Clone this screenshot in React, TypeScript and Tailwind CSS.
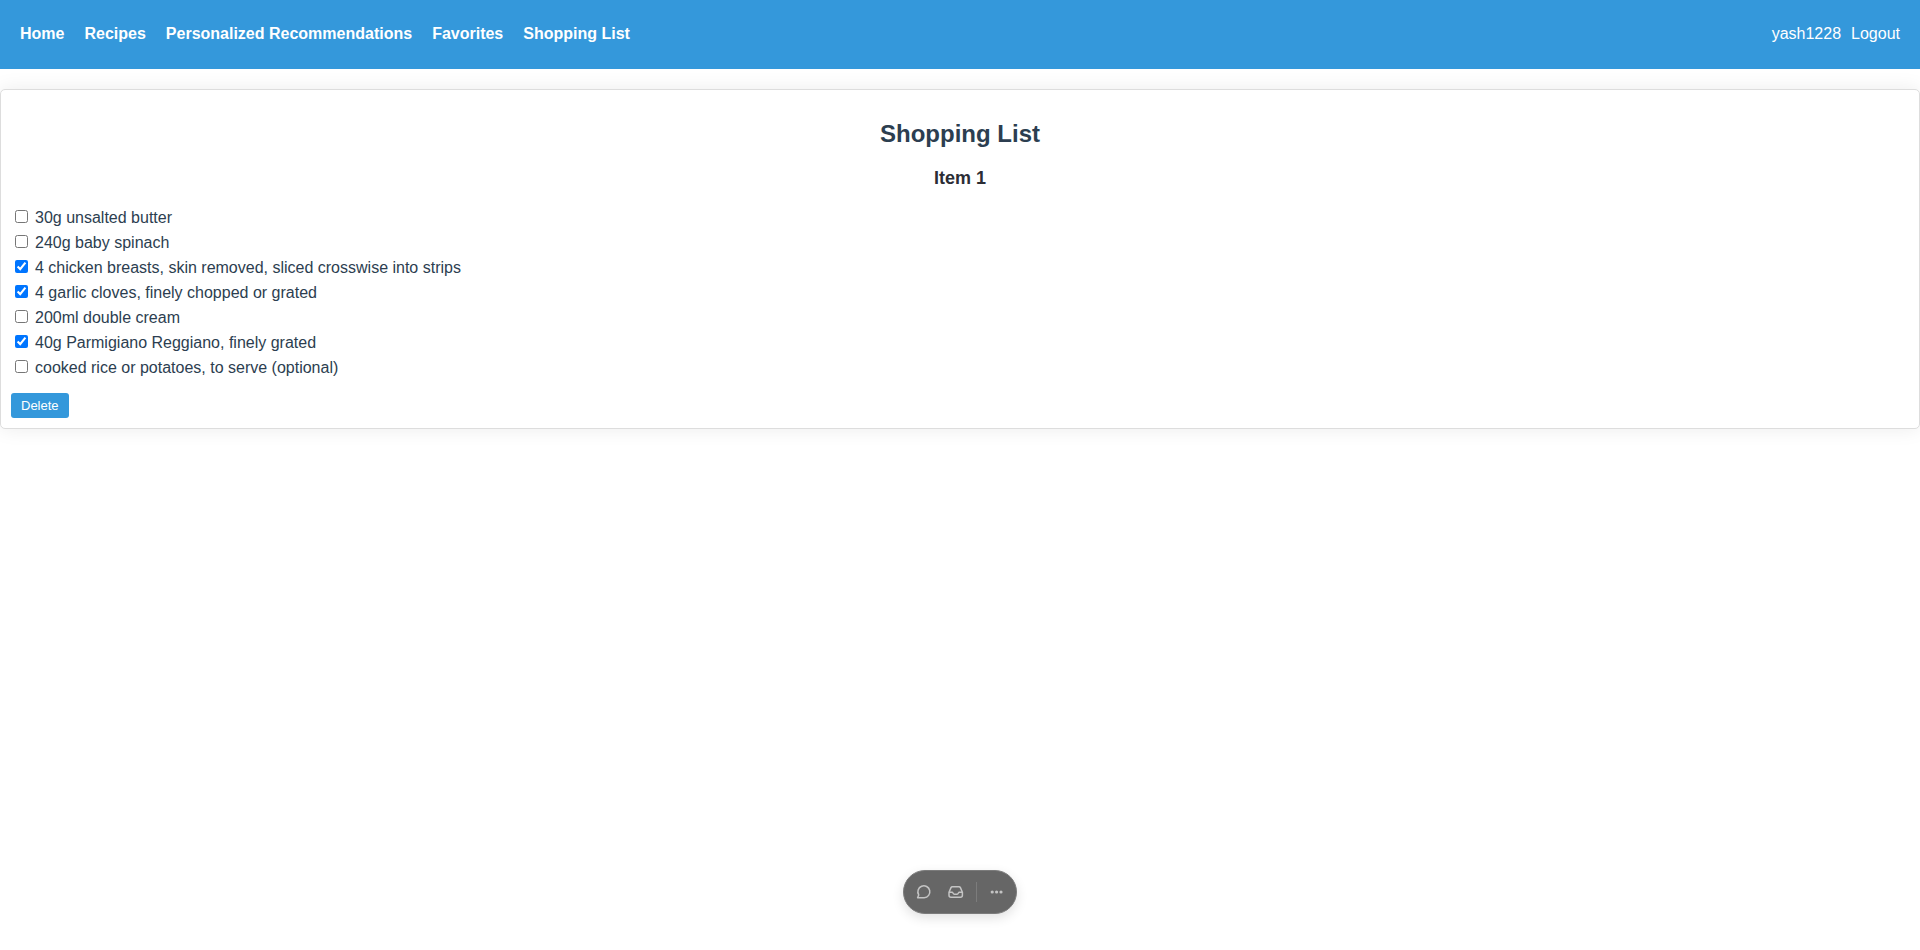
import { useState } from "react";

const links = ["Home", "Recipes", "Personalized Recommendations", "Favorites", "Shopping List"];

const ingredients = [
  { name: "30g unsalted butter", bought: false },
  { name: "240g baby spinach", bought: false },
  { name: "4 chicken breasts, skin removed, sliced crosswise into strips", bought: true },
  { name: "4 garlic cloves, finely chopped or grated", bought: true },
  { name: "200ml double cream", bought: false },
  { name: "40g Parmigiano Reggiano, finely grated", bought: true },
  { name: "cooked rice or potatoes, to serve (optional)", bought: false },
];

function Header() {
  return (
    <header className="flex items-center justify-between bg-[#3498db] px-5 pt-[21px] pb-[23px] text-base/[25px] text-white">
      <nav>
        <ul className="flex gap-5 font-bold">
          {links.map((link) => (
            <li key={link}>
              <a href="#">{link}</a>
            </li>
          ))}
        </ul>
      </nav>
      <div className="flex gap-2.5">
        <span>yash1228</span>
        <a href="#">Logout</a>
      </div>
    </header>
  );
}

function ShoppingList() {
  const [items, setItems] = useState(ingredients);
  const toggle = (index: number) =>
    setItems(items.map((item, i) => (i === index ? { ...item, bought: !item.bought } : item)));

  return (
    <main className="mt-5 rounded-[5px] border border-[#ddd] bg-white p-2.5 shadow-[0_0_20px_rgba(0,0,0,0.08)]">
      <h1 className="mt-5 text-center text-2xl/7 font-bold text-[#2c3e50]">Shopping List</h1>
      <h2 className="mt-4 text-center text-lg/7 font-bold text-[#2b2d35]">Item 1</h2>
      <ul className="mt-3">
        {items.map((item, index) => (
          <li key={item.name}>
            <label className="flex h-[25px] items-start text-base/[27px]">
              <input
                type="checkbox"
                checked={item.bought}
                onChange={() => toggle(index)}
                className="mt-1.5 mr-[7px] ml-1 size-[13px]"
              />
              {item.name}
            </label>
          </li>
        ))}
      </ul>
      <button type="button" className="mt-3.5 block rounded-[3px] bg-[#3498db] px-2.5 py-[5px] text-[13px]/[15px] text-white">
        Delete
      </button>
    </main>
  );
}

function Toolbar() {
  return (
    <div
      role="toolbar"
      aria-label="Comments"
      className="fixed bottom-9 left-1/2 flex h-11 w-[114px] -translate-x-1/2 items-center rounded-full border border-[#7b7b7b] bg-[#666] pl-1 text-[#c4c4c4] shadow-[0_4px_12px_rgba(0,0,0,0.12)]"
    >
      <button type="button" aria-label="Comment" className="flex size-8 items-center justify-center">
        <svg width="16" height="16" viewBox="0 0 16 16" fill="none" stroke="currentColor" strokeWidth="1.5" strokeLinejoin="round">
          <path d="M1.6 13.8 2.7 10.9A6 6 0 1 1 8.2 13.8Z" />
        </svg>
      </button>
      <button type="button" aria-label="Inbox" className="flex size-8 items-center justify-center">
        <svg width="16" height="16" viewBox="0 0 16 16" fill="none" stroke="currentColor" strokeWidth="1.5" strokeLinejoin="round">
          <path d="M1 8.2 3 3.6Q3.4 2.7 4.4 2.7H11Q12 2.7 12.4 3.6L14.4 8.2V11.3Q14.4 13.3 12.4 13.3H3Q1 13.3 1 11.3ZM1 8.2H4.2C5 8.2 5 10.2 6.3 10.2H9.1C10.4 10.2 10.4 8.2 11.2 8.2H14.4" />
        </svg>
      </button>
      <span className="mx-1 h-5 w-px bg-[#7c7c7c]" />
      <button type="button" aria-label="More" className="flex size-8 items-center justify-center">
        <svg width="16" height="16" viewBox="0 0 16 16" fill="currentColor">
          <circle cx="3.2" cy="8" r="1.6" />
          <circle cx="7.6" cy="8" r="1.6" />
          <circle cx="12" cy="8" r="1.6" />
        </svg>
      </button>
    </div>
  );
}

export default function App() {
  return (
    <div className="min-h-screen bg-white font-['Liberation_Sans',Arial,sans-serif] text-[#2c3e50]">
      <Header />
      <ShoppingList />
      <Toolbar />
    </div>
  );
}
